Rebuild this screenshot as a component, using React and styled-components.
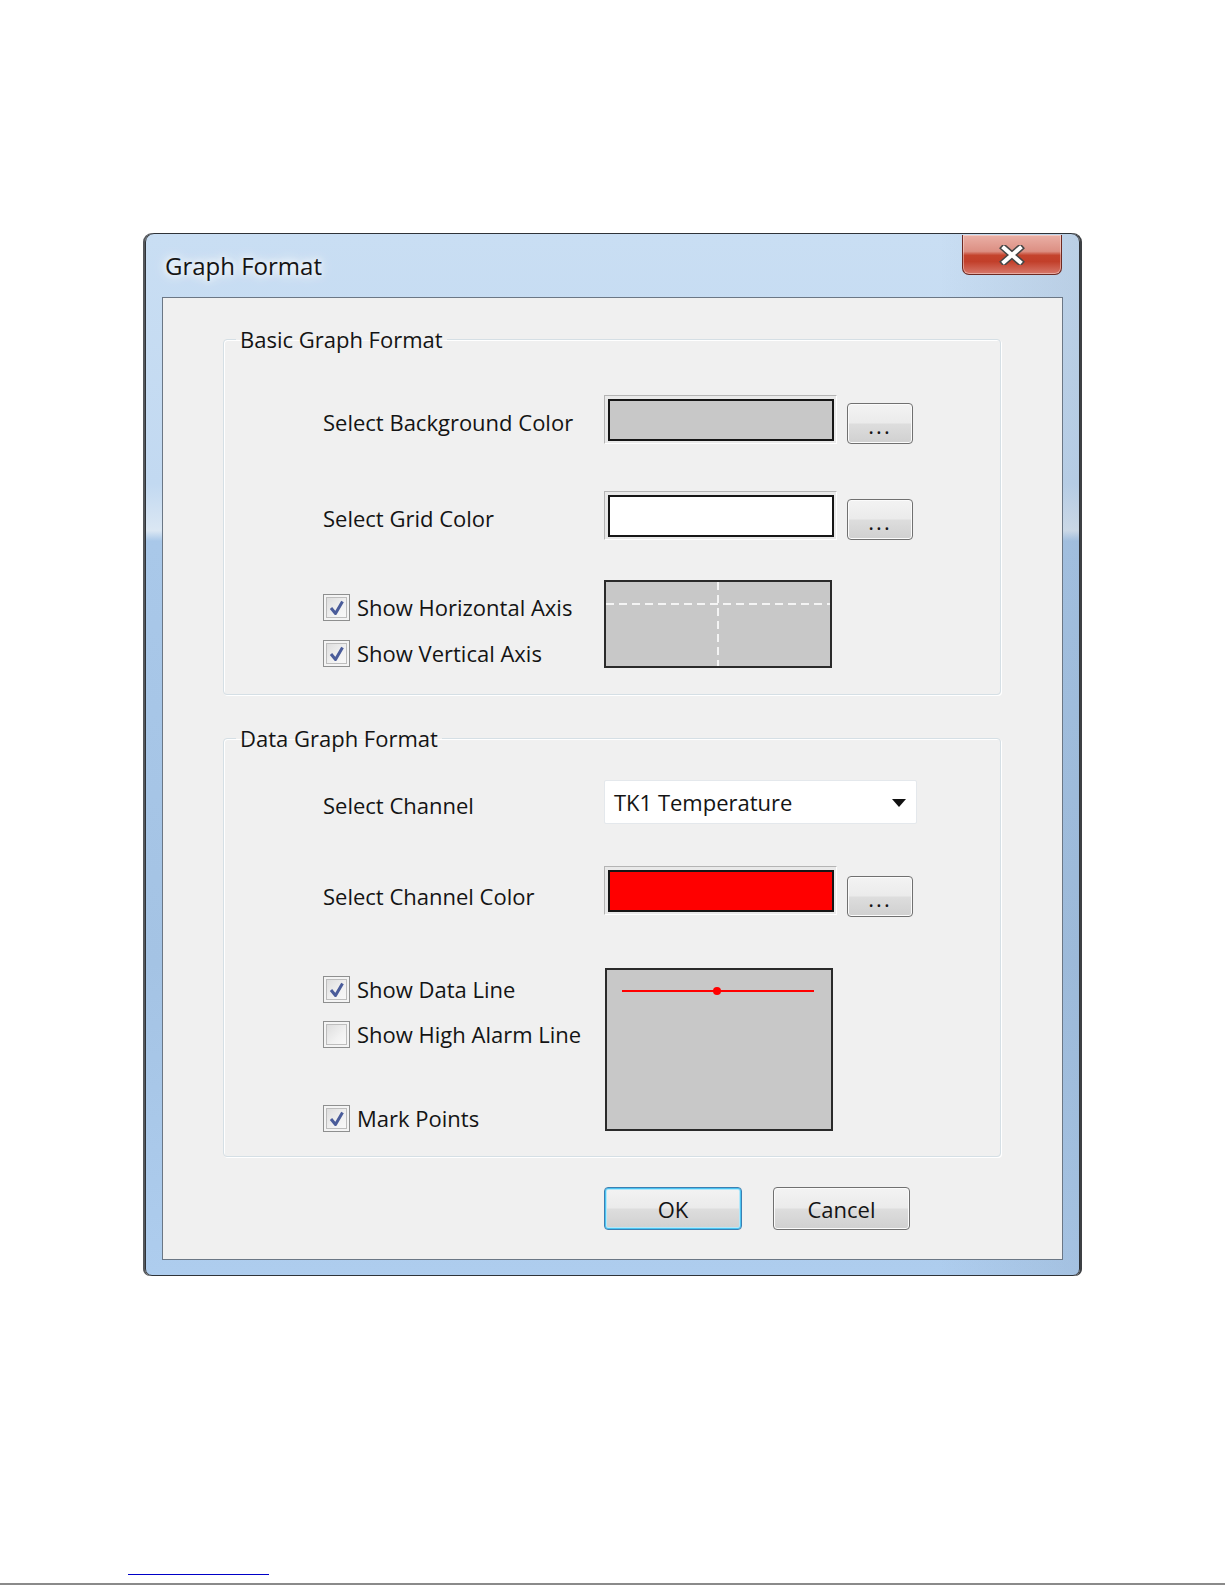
import React from 'react'
import styled, { createGlobalStyle } from 'styled-components'

const FONT = '"Open Sans", "Noto Sans", sans-serif'

const GlobalStyle = createGlobalStyle`
  html, body {
    margin: 0;
    padding: 0;
    background: #ffffff;
  }
  body {
    font-family: ${FONT};
    color: #141414;
  }
`

const Page = styled.div`
  width: 1225px;
  height: 1585px;
  box-sizing: border-box;
  padding-top: 233px;
  display: flex;
  flex-direction: column;
`

const Window = styled.div`
  margin-left: 145px;
  width: 935px;
  height: 1043px;
  box-sizing: border-box;
  border: 1px solid #2f3338;
  border-radius: 9px 9px 7px 7px;
  padding: 0 16px 15px 16px;
  display: flex;
  flex-direction: column;
  background:
    linear-gradient(90deg, rgba(255, 255, 255, 0) 0%, rgba(255, 255, 255, 0) 85%, rgba(120, 140, 165, 0.18) 100%),
    linear-gradient(180deg, #c9def3 0%, #c2d9f1 24%, #dbe7f3 28.5%, #a9c8e9 29.5%, #a4c3e4 70%, #aecdee 100%);
  box-shadow: -2px 0 0 #55585c, 2px 0 0 #3d4044;
`

const TitleBar = styled.div`
  height: 63px;
  display: flex;
  justify-content: space-between;
  align-items: flex-start;
`

const Title = styled.div`
  margin: 17px 0 0 3px;
  font-size: 24px;
  line-height: 30px;
  color: #151515;
  text-shadow: 0 0 6px #ffffff, 0 0 12px #ffffff, 0 0 18px rgba(255, 255, 255, 0.8);
`

const CloseButton = styled.div`
  margin: 1px 1px 0 0;
  width: 100px;
  height: 40px;
  box-sizing: border-box;
  border: 1px solid #6e2a22;
  border-top: none;
  border-radius: 0 0 7px 7px;
  background: linear-gradient(180deg, #eab0a6 0%, #dc8f83 42%, #c4432d 52%, #c23f2a 68%, #d7786b 100%);
  box-shadow: inset 0 0 0 1px rgba(255, 235, 230, 0.45);
  display: flex;
  align-items: center;
  justify-content: center;
`

const Client = styled.div`
  flex: 1;
  border: 1px solid #6b7785;
  background: #f0f0f0;
  padding: 0 61px 0 60px;
  display: flex;
  flex-direction: column;
`

const Group = styled.fieldset`
  margin: ${p => p.$top}px 0 0 0;
  padding: 0;
  min-width: 0;
  border: 1px solid #d5dfe5;
  border-radius: 4px;
  box-shadow: inset 1px 1px 0 #ffffff, 1px 1px 0 #ffffff;
`

const Legend = styled.legend`
  margin-left: 12px;
  padding: 0 4px;
  font-size: 22px;
  line-height: 26px;
  color: #141414;
`

const GroupBody = styled.div`
  padding: ${p => p.$pad};
  display: flex;
  flex-direction: column;
`

const Row = styled.div`
  margin-top: ${p => p.$top || 0}px;
  display: flex;
  align-items: flex-end;
`

const Label = styled.div`
  width: 281px;
  flex: none;
  font-size: 22px;
  line-height: 30px;
  padding-bottom: ${p => p.$lift || 0}px;
`

const Swatch = styled.div`
  width: 233px;
  height: 49px;
  box-sizing: border-box;
  border: 1px solid;
  border-color: #b4b4b4 #ffffff #ffffff #b4b4b4;
  padding: 3px 2px 2px 3px;
  background: #e9e9e9;
  display: flex;
`

const SwatchColor = styled.div`
  flex: 1;
  border: 2px solid #161616;
  background: ${p => p.$color};
`

const WinButton = styled.div`
  box-sizing: border-box;
  width: ${p => p.$w}px;
  height: ${p => p.$h}px;
  margin-left: ${p => p.$gap || 0}px;
  margin-bottom: ${p => p.$drop || 0}px;
  padding-top: ${p => p.$sink || 0}px;
  border: 1px solid ${p => (p.$primary ? '#3c7fb1' : '#707070')};
  border-radius: 4px;
  background: linear-gradient(180deg, #f3f3f3 0%, #ebebeb 48%, #dddddd 52%, #d0d0d0 100%);
  box-shadow: ${p => (p.$primary
    ? 'inset 0 0 0 1px #4bc4f2, inset 0 0 0 2px #b4e8fa'
    : 'inset 0 0 0 1px #fbfbfb')};
  display: flex;
  align-items: center;
  justify-content: center;
  font-size: 22px;
  line-height: 1;
  color: #141414;
  letter-spacing: ${p => p.$spacing || 0}px;
`

const Dropdown = styled.div`
  width: 313px;
  height: 44px;
  box-sizing: border-box;
  border: 1px solid #e4e8ec;
  border-radius: 2px;
  background: #ffffff;
  display: flex;
  align-items: center;
  justify-content: space-between;
  padding: 0 10px 0 9px;
  font-size: 22px;
`

const Arrow = styled.div`
  width: 0;
  height: 0;
  border-left: 7px solid transparent;
  border-right: 7px solid transparent;
  border-top: 8px solid #111111;
  margin-top: 2px;
`

const CheckArea = styled.div`
  margin-top: ${p => p.$top}px;
  display: flex;
  align-items: flex-start;
`

const CheckList = styled.div`
  width: 281px;
  flex: none;
  display: flex;
  flex-direction: column;
`

const CheckItem = styled.div`
  margin-top: ${p => p.$top}px;
  height: 27px;
  display: flex;
  align-items: center;
  gap: 7px;
  font-size: 22px;
  line-height: 27px;
`

const Box = styled.div`
  width: 27px;
  height: 27px;
  box-sizing: border-box;
  border: 1px solid #8e8f8f;
  background: linear-gradient(135deg, #d9d9d9 0%, #f2f2f2 60%, #fbfbfb 100%);
  box-shadow: inset 0 0 0 2px #f4f4f4, inset 0 0 0 3px #bdbdbd;
  display: flex;
  align-items: center;
  justify-content: center;
`

const Preview = styled.div`
  width: 228px;
  height: ${p => p.$h}px;
  box-sizing: border-box;
  margin-left: ${p => p.$shift || 0}px;
  border: 2px solid #2a2a2a;
  background: #c8c8c8;
  svg {
    display: block;
  }
`

const ButtonRow = styled.div`
  margin-top: 30px;
  padding-left: 381px;
  display: flex;
  gap: 31px;
`

const FootNote = styled.div`
  margin: auto 0 0 128px;
  width: 141px;
  height: 1px;
  background: #0000c8;
`

const PageRule = styled.div`
  margin-top: 8px;
  height: 2px;
  background: #8a8a8a;
`

function CloseGlyph() {
  return (
    <svg width="26" height="20" viewBox="0 0 26 20">
      <path d="M5 3 L21 17 M21 3 L5 17" stroke="#454545" strokeWidth="7" strokeLinecap="square" />
      <path d="M5 3 L21 17 M21 3 L5 17" stroke="#ffffff" strokeWidth="4" strokeLinecap="square" />
    </svg>
  )
}

function Check({ checked, label, top }) {
  return (
    <CheckItem $top={top}>
      <Box>
        {checked && (
          <svg width="18" height="18" viewBox="0 0 18 18">
            <path d="M3 9 L7.5 14.5 L14.5 2.5" fill="none" stroke="#4a5c9a" strokeWidth="3" strokeLinejoin="round" />
          </svg>
        )}
      </Box>
      {label}
    </CheckItem>
  )
}

function ColorRow({ label, color, top, lift, drop }) {
  return (
    <Row $top={top}>
      <Label $lift={lift}>{label}</Label>
      <Swatch>
        <SwatchColor $color={color} />
      </Swatch>
      <WinButton $w={66} $h={41} $gap={10} $drop={drop} $spacing={2} $sink={3}>...</WinButton>
    </Row>
  )
}

function AxisPreview() {
  return (
    <Preview $h={88}>
      <svg width="224" height="84" viewBox="0 0 224 84">
        <line x1="0" y1="22" x2="224" y2="22" stroke="#f4f4f4" strokeWidth="2" strokeDasharray="8 5" />
        <line x1="112" y1="0" x2="112" y2="84" stroke="#f4f4f4" strokeWidth="2" strokeDasharray="8 5" />
      </svg>
    </Preview>
  )
}

function DataPreview() {
  return (
    <Preview $h={163} $shift={1}>
      <svg width="224" height="159" viewBox="0 0 224 159">
        <line x1="15" y1="21" x2="207" y2="21" stroke="#ff0000" strokeWidth="2" />
        <circle cx="110" cy="21" r="4" fill="#ff0000" />
      </svg>
    </Preview>
  )
}

export default function App() {
  return (
    <Page>
      <GlobalStyle />
      <Window>
        <TitleBar>
          <Title>Graph Format</Title>
          <CloseButton>
            <CloseGlyph />
          </CloseButton>
        </TitleBar>
        <Client>
          <Group $top={28}>
            <Legend>Basic Graph Format</Legend>
            <GroupBody $pad="43px 0 26px 99px">
              <ColorRow label="Select Background Color" color="#c8c8c8" lift={7} />
              <ColorRow label="Select Grid Color" color="#ffffff" top={47} lift={7} />
              <CheckArea $top={40}>
                <CheckList>
                  <Check checked label="Show Horizontal Axis" top={14} />
                  <Check checked label="Show Vertical Axis" top={19} />
                </CheckList>
                <AxisPreview />
              </CheckArea>
            </GroupBody>
          </Group>
          <Group $top={30}>
            <Legend>Data Graph Format</Legend>
            <GroupBody $pad="29px 0 24px 99px">
              <Row>
                <Label $lift={4}>Select Channel</Label>
                <Dropdown>
                  TK1 Temperature
                  <Arrow />
                </Dropdown>
              </Row>
              <ColorRow label="Select Channel Color" color="#ff0000" top={42} lift={4} drop={-2} />
              <CheckArea $top={53}>
                <CheckList>
                  <Check checked label="Show Data Line" top={8} />
                  <Check label="Show High Alarm Line" top={18} />
                  <Check checked label="Mark Points" top={57} />
                </CheckList>
                <DataPreview />
              </CheckArea>
            </GroupBody>
          </Group>
          <ButtonRow>
            <WinButton $w={138} $h={43} $primary>OK</WinButton>
            <WinButton $w={137} $h={43}>Cancel</WinButton>
          </ButtonRow>
        </Client>
      </Window>
      <FootNote />
      <PageRule />
    </Page>
  )
}
